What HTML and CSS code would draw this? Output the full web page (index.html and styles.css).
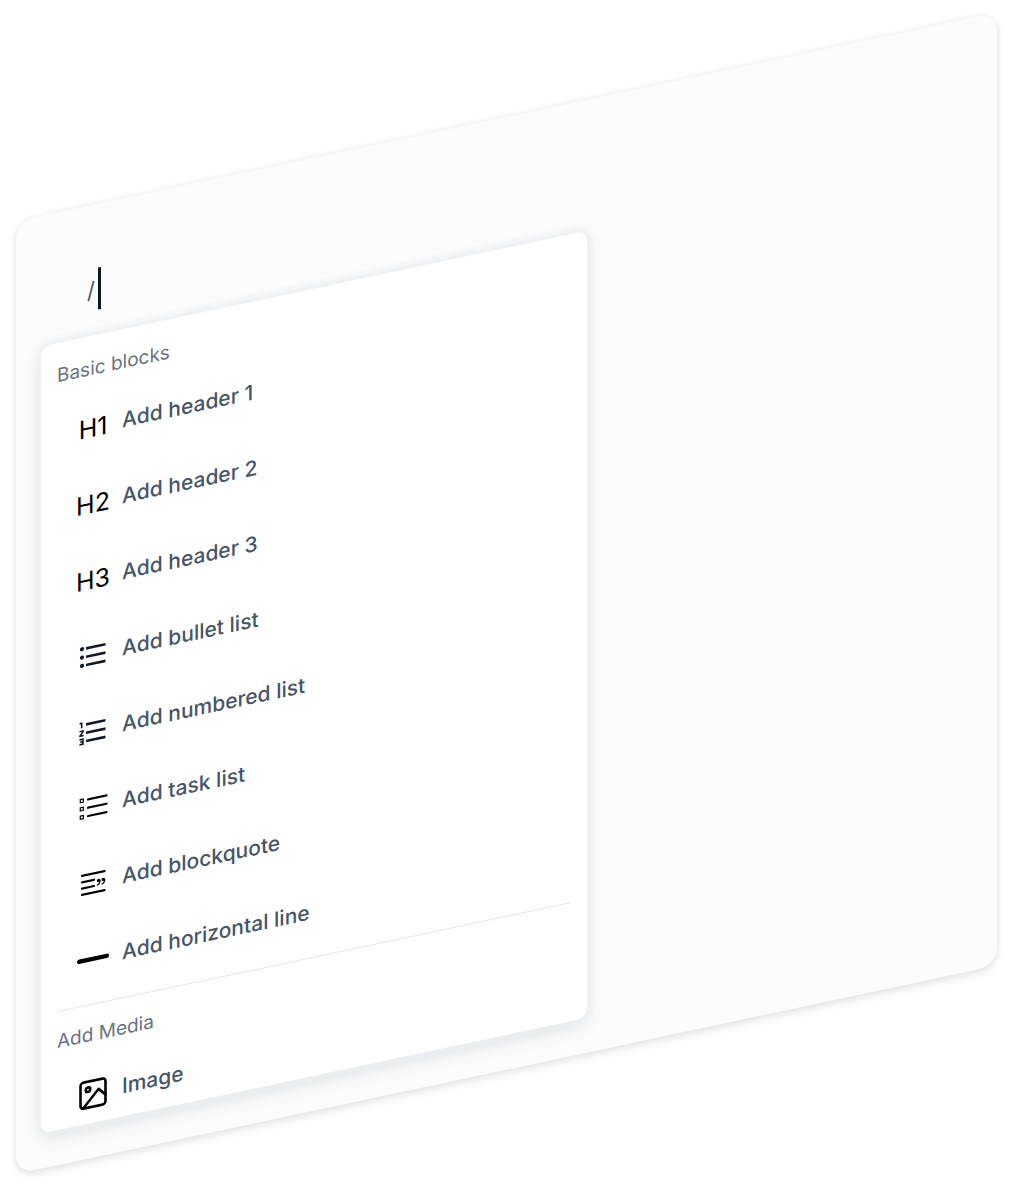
FILE: index.html
```
<!DOCTYPE html>
<html lang="en">
<head>
    <meta charset="UTF-8">
    <meta name="viewport" content="width=device-width, initial-scale=1.0">
    <title>Slash Menu</title>
    <link rel="stylesheet" href="styles.css">
</head>
<body>
    <main class="editor">
        <div class="prompt">
            <input type="text" class="prompt-input" value="/" aria-label="Command">
            <span class="caret"></span>
        </div>

        <div class="menu">
            <h2 class="menu-title">Basic blocks</h2>
            <ul class="menu-list">
                <li>
                    <button type="button" class="menu-item">
                        <span class="icon icon-text">H1</span>
                        <span class="label">Add header 1</span>
                    </button>
                </li>
                <li>
                    <button type="button" class="menu-item">
                        <span class="icon icon-text">H2</span>
                        <span class="label">Add header 2</span>
                    </button>
                </li>
                <li>
                    <button type="button" class="menu-item">
                        <span class="icon icon-text">H3</span>
                        <span class="label">Add header 3</span>
                    </button>
                </li>
                <li>
                    <button type="button" class="menu-item">
                        <svg class="icon" viewBox="0 0 32 32" fill="#111827" aria-hidden="true">
                            <circle cx="5" cy="7.300" r="2.1"/>
                            <circle cx="5" cy="15.600" r="2.1"/>
                            <circle cx="5" cy="23.900" r="2.1"/>
                            <path d="M9 6h19.500v2.600H9zM9 14.300h19.500v2.600H9zM9 22.600h19.500v2.600H9z"/>
                        </svg>
                        <span class="label">Add bullet list</span>
                    </button>
                </li>
                <li>
                    <button type="button" class="menu-item">
                        <svg class="icon" viewBox="0 0 32 32" fill="none" stroke="#111827" aria-hidden="true">
                            <path stroke-width="2.600" d="M9 7.300h19.500M9 15.600h19.500M9 23.900h19.500"/>
                            <path stroke-width="1.600" d="M2.500 5.300h2.200v5M2.500 13.200h3.500v1l-3 3.200v.5h3.700M2.500 21.400h3.500v5H2.500M3.200 23.900h2.800"/>
                        </svg>
                        <span class="label">Add numbered list</span>
                    </button>
                </li>
                <li>
                    <button type="button" class="menu-item">
                        <svg class="icon" viewBox="0 0 32 32" fill="none" stroke="#000" aria-hidden="true">
                            <path stroke-width="2.200" stroke-linecap="round" d="M11 6.700h18.500M11 15h18.500M11 23.300h18.500"/>
                            <path stroke-width="1.200" d="M3.300 5.200h3v3.200h-3zM3.300 13.500h3v3.200h-3zM3.300 21.800h3v3.200h-3z"/>
                        </svg>
                        <span class="label">Add task list</span>
                    </button>
                </li>
                <li>
                    <button type="button" class="menu-item">
                        <svg class="icon" viewBox="0 0 32 32" fill="none" stroke="#000" stroke-linecap="round" aria-hidden="true">
                            <path stroke-width="2.200" d="M5 6h22.500M5 12.400h12M5 18.600h12M5 24.900h22.500"/>
                            <circle cx="21.300" cy="14" r="1.500" fill="#000" stroke="none"/>
                            <circle cx="26" cy="14" r="1.500" fill="#000" stroke="none"/>
                            <path stroke-width="1.400" d="M21.500 13c2.300.800 1.800 4.200-1 5.200M26.200 13c2.300.800 1.800 4.200-1 5.200"/>
                        </svg>
                        <span class="label">Add blockquote</span>
                    </button>
                </li>
                <li>
                    <button type="button" class="menu-item">
                        <svg class="icon" viewBox="0 0 32 32" aria-hidden="true">
                            <rect y="13" width="32" height="4.400" rx="2.200"/>
                        </svg>
                        <span class="label">Add horizontal line</span>
                    </button>
                </li>
            </ul>

            <hr class="divider">

            <h2 class="menu-title">Add Media</h2>
            <ul class="menu-list">
                <li>
                    <button type="button" class="menu-item">
                        <svg class="icon" viewBox="0 0 32 32" fill="none" stroke="#000" stroke-width="2.600" stroke-linecap="round" stroke-linejoin="round" aria-hidden="true">
                            <rect x="3.500" y="3" width="25" height="26" rx="3"/>
                            <circle cx="11" cy="11" r="2.200"/>
                            <path d="M28.500 19.500l-7-7L6 29"/>
                        </svg>
                        <span class="label">Image</span>
                    </button>
                </li>
            </ul>
        </div>
    </main>
</body>
</html>
```
FILE: styles.css
```
* {
    box-sizing: border-box;
}

body {
    margin: 0;
    padding: 221px 16px 16px;
    background-color: #fff;
    font-family: Inter, sans-serif;
    overflow: hidden;
}

/* Tilted editor surface */
.editor {
    padding: 64px 25px 35px;
    background-color: #fcfcfc;
    border-radius: 18px;
    box-shadow: 0 0 6px 1px rgba(0, 0, 0, 0.06), 0 5px 8px rgba(0, 0, 0, 0.07);
    transform: skewY(-12deg);
    transform-origin: left top;
}

.prompt {
    display: flex;
    align-items: center;
    height: 42px;
    margin-bottom: 25px;
    padding-left: 46px;
}

.prompt-input {
    width: 11px;
    padding: 0;
    border: none;
    outline: none;
    background: none;
    color: #475569;
    font-family: inherit;
    font-size: 22px;
}

.caret {
    width: 3px;
    height: 42px;
    background-color: #111827;
}

/* Menu */
.menu {
    width: 100%;
    max-width: 546px;
    padding: 19px 16px 7px;
    background-color: #fff;
    border-radius: 10px;
    box-shadow: 0 0 6px 4px #eef0f3, 0 6px 16px rgba(71, 85, 105, 0.18);
}

.menu-title {
    margin: 0 0 23px;
    color: #6b7280;
    font-size: 19px;
    font-weight: 400;
    line-height: 28px;
}

.menu-list {
    display: flex;
    flex-direction: column;
    gap: 32px;
    margin: 0;
    padding: 0;
    list-style: none;
}

.menu-item {
    display: flex;
    align-items: center;
    gap: 13px;
    width: 100%;
    height: 44px;
    padding: 0 20px;
    border: none;
    background: none;
    color: #475569;
    font-family: inherit;
    font-size: 21px;
    font-weight: 500;
    text-align: left;
    cursor: pointer;
}

.icon {
    flex: none;
    width: 32px;
    height: 32px;
}

.icon-text {
    display: flex;
    align-items: center;
    justify-content: center;
    color: #000;
    font-size: 25px;
    font-weight: 400;
}

.label {
    padding-bottom: 4px;
}

.divider {
    height: 1px;
    margin: 22px 0 16px;
    border: none;
    background-color: #e5e7eb;
}
```
